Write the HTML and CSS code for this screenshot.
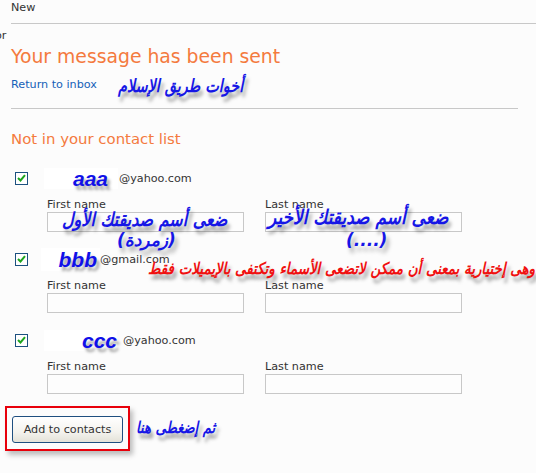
FILE: index.html
```html
<!DOCTYPE html>
<html>
<head>
<meta charset="utf-8">
<link rel="stylesheet" href="styles.css">
</head>
<body>
<div class="page">
  <div class="topbar"><span class="new">New</span></div>
  <div class="side-or">or</div>

  <div class="content">
    <h1 class="sent">Your message has been sent</h1>
    <div class="return-row">
      <a class="return" href="#">Return to inbox</a>
      <span class="ar ar-blue ar-sisters" dir="rtl">أخوات طريق الإسلام</span>
    </div>
    <div class="rule"></div>

    <h2 class="notin">Not in your contact list</h2>

    <div class="contact">
      <div class="row">
        <span class="check"><svg width="9" height="8" viewBox="0 0 9 8"><path d="M1 4 L3.5 6.5 L8 1.2" fill="none" stroke="#1ea51e" stroke-width="2"/></svg></span>
        <span class="namebox nb-a"><span class="nick">aaa</span></span>
        <span class="email em-a">@yahoo.com</span>
      </div>
      <div class="fields">
        <div class="field"><label>First name</label><div class="input"></div></div>
        <div class="field"><label>Last name</label><div class="input"></div></div>
      </div>
      <span class="ar ar-blue ar-first" dir="rtl">ضعى أسم صديقتك الأول</span>
      <span class="ar ar-blue ar-zum" dir="rtl">(زمردة)</span>
      <span class="ar ar-blue ar-last" dir="rtl">ضعى أسم صديقتك الأخير</span>
      <span class="ar ar-blue ar-dots" dir="rtl">(....)</span>
    </div>

    <div class="contact">
      <div class="row">
        <span class="check"><svg width="9" height="8" viewBox="0 0 9 8"><path d="M1 4 L3.5 6.5 L8 1.2" fill="none" stroke="#1ea51e" stroke-width="2"/></svg></span>
        <span class="namebox nb-b"><span class="nick">bbb</span></span>
        <span class="email em-b">@gmail.com</span>
      </div>
      <div class="fields">
        <div class="field"><label>First name</label><div class="input"></div></div>
        <div class="field"><label>Last name</label><div class="input"></div></div>
      </div>
      <span class="ar ar-red" dir="rtl">وهى إختيارية بمعنى أن ممكن لاتضعى الأسماء وتكتفى بالإيميلات فقط</span>
    </div>

    <div class="contact">
      <div class="row">
        <span class="check"><svg width="9" height="8" viewBox="0 0 9 8"><path d="M1 4 L3.5 6.5 L8 1.2" fill="none" stroke="#1ea51e" stroke-width="2"/></svg></span>
        <span class="namebox nb-c"><span class="nick">ccc</span></span>
        <span class="email em-c">@yahoo.com</span>
      </div>
      <div class="fields">
        <div class="field"><label>First name</label><div class="input"></div></div>
        <div class="field"><label>Last name</label><div class="input"></div></div>
      </div>
    </div>

    <div class="action">
      <div class="redframe"><button class="add">Add to contacts</button></div>
      <span class="ar ar-blue ar-press" dir="rtl">ثم إضغطى هنا</span>
    </div>
  </div>
</div>
</body>
</html>
```

FILE: styles.css
```css
html, body {
  margin: 0;
  padding: 0;
  background: #fcfcfc;
}
body {
  font-family: "DejaVu Sans", Verdana, sans-serif;
  font-size: 11.2px;
  color: #333;
  overflow: hidden;
  width: 536px;
  height: 473px;
}
.page {
  position: relative;
}
.topbar {
  margin-left: 11px;
  height: 24px;
  border-bottom: 1px solid #c8c8c8;
  box-sizing: border-box;
}
.new {
  display: block;
  padding-top: 1px;
  line-height: 14px;
  color: #333;
}
.side-or {
  margin-left: -5px;
  margin-top: 5px;
  height: 13px;
  line-height: 13px;
  color: #333;
}
.content {
  margin-left: 11px;
  width: 507px;
  position: relative;
}
.sent {
  margin: 3px 0 0 0;
  font-weight: normal;
  font-size: 18.8px;
  line-height: 24px;
  color: #f47a3e;
  white-space: nowrap;
}
.return-row {
  position: relative;
  height: 24px;
  margin-top: 3px;
  display: flex;
  align-items: center;
}
.return {
  color: #1560b8;
  text-decoration: none;
}
.rule {
  margin-top: 12px;
  height: 1px;
  background: #c8c8c8;
}
.notin {
  margin: 20px 0 0 0;
  font-weight: normal;
  font-size: 14.9px;
  line-height: 20px;
  color: #f47a3e;
}
.contact {
  position: relative;
}
.notin + .contact {
  margin-top: 19px;
}
.row {
  height: 20px;
  display: flex;
  align-items: center;
}
.check {
  margin-left: 4px;
  width: 11px;
  height: 11px;
  border: 1px solid #1c5180;
  background: #fff;
  display: flex;
  align-items: center;
  justify-content: center;
}
.namebox {
  height: 21px;
  background: #fff;
  display: flex;
  align-items: center;
  justify-content: flex-end;
  box-sizing: border-box;
  padding-right: 10px;
}
.nick {
  font-family: "Liberation Sans", Arial, sans-serif;
  font-weight: bold;
  font-style: italic;
  font-size: 21px;
  color: #1010e8;
  text-shadow: 3px 4px 3px rgba(0,0,0,0.35);
  line-height: 21px;
}
.nb-a { margin-left: 16px; width: 74px; }
.nb-b { margin-left: 13px; width: 59px; padding-right: 3px; height: 23px; }
.nb-c { margin-left: 16px; width: 73px; padding-right: 0; }
.email { color: #333; }
.em-a { margin-left: 1px; }
.em-b { margin-left: 0; }
.em-c { margin-left: 6px; }

.fields {
  margin-top: 10px;
  margin-left: 36px;
  display: flex;
  gap: 21px;
  padding-bottom: 17px;
}
.field {
  width: 197px;
}
.field label {
  display: block;
  height: 14px;
  line-height: 14px;
  color: #333;
}
.input {
  height: 20px;
  box-sizing: border-box;
  border: 1px solid #c8c8c8;
  background: #fdfdfd;
}

.action {
  position: relative;
  display: flex;
  align-items: center;
  margin-top: -5px;
  margin-left: -6px;
}
.redframe {
  width: 125px;
  height: 45px;
  box-sizing: border-box;
  border: 2px solid #e8000b;
  padding: 8px 0 0 5px;
  box-shadow: 3px 4px 5px rgba(0,0,0,0.25);
}
.add {
  display: block;
  width: 111px;
  height: 27px;
  border: 1px solid #1f4f80;
  border-radius: 3px;
  background: linear-gradient(#ffffff, #f4f3ee 60%, #e4e2d8);
  font-family: "DejaVu Sans", Verdana, sans-serif;
  font-size: 11.2px;
  color: #333;
  padding: 0;
}

.ar {
  position: absolute;
  font-family: "DejaVu Sans", sans-serif;
  font-weight: bold;
  font-style: italic;
  white-space: nowrap;
  line-height: 1;
  transform-origin: left center;
}
.ar-blue {
  color: #1616e6;
  text-shadow: 3px 5px 4px rgba(0,0,0,0.35);
}
.ar-red {
  color: #f01010;
  text-shadow: 3px 5px 4px rgba(0,0,0,0.35);
  font-size: 16px;
  left: 137px;
  top: 12px;
  transform: scaleX(0.84);
}
.ar-sisters { font-size: 18px; left: 107px; top: 5px; transform: scaleX(0.8); }
.ar-first { font-size: 19px; left: 51px; top: 42px; transform: scaleX(0.84); }
.ar-zum { font-size: 17px; left: 106px; top: 64px; }
.ar-last { font-size: 20px; left: 257px; top: 39px; transform: scaleX(0.85); }
.ar-dots { font-size: 17px; left: 335px; top: 64px; }
.ar-press { font-size: 16px; left: 131px; top: 14px; transform: scaleX(0.82); }
```
